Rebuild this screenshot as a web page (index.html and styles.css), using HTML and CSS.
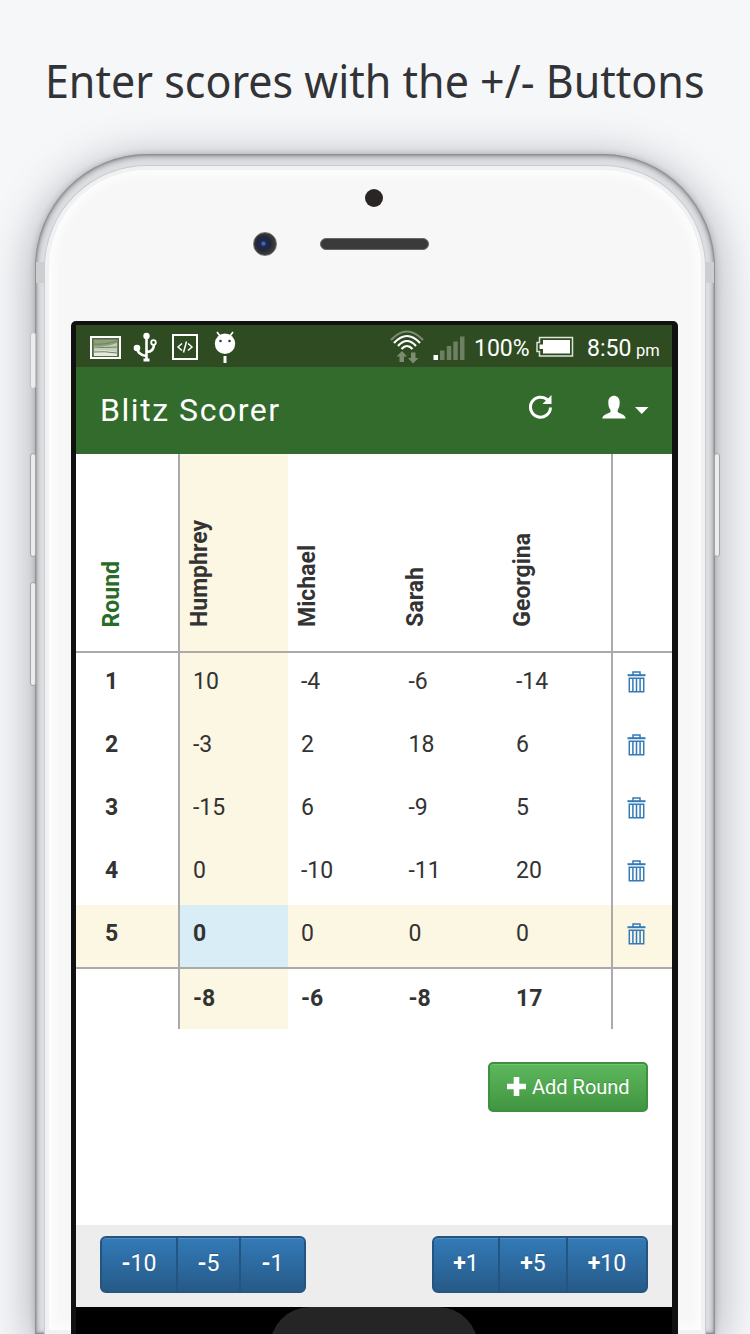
FILE: index.html
```html
<!DOCTYPE html>
<html lang="en">
<head>
<meta charset="utf-8">
<title>Blitz Scorer</title>
<link rel="stylesheet" href="styles.css">
</head>
<body>
<svg width="0" height="0" class="defs" aria-hidden="true">
  <symbol id="trash" viewBox="0 0 18 22">
    <path d="M0 4.200h18" fill="none" stroke="currentColor" stroke-width="2"/>
    <path d="M5.500 4V1h7v3M1.800 7.200h14.400v13.600H1.800zM5.400 7v14M9 7v14M12.600 7v14" fill="none" stroke="currentColor" stroke-width="1.500"/>
  </symbol>
</svg>
<h1 class="headline"><span class="headline-text">Enter scores with the +/- Buttons</span></h1>
<div class="phone">
  <i class="side mute"></i><i class="side vol-up"></i><i class="side vol-down"></i><i class="side power"></i>
  <i class="antenna left"></i><i class="antenna right"></i>
  <div class="face">
    <div class="sensors">
      <i class="proximity"></i>
      <div class="sensor-row"><i class="camera"></i><i class="speaker"></i></div>
    </div>
    <div class="screen">
      <div class="status">
        <svg class="status-left" width="150" height="34" viewBox="0 0 150 34">
          <rect x="1" y="7" width="29" height="21" fill="#52693f" stroke="#fff" stroke-width="2"/>
          <rect x="3.500" y="9.500" width="24" height="16" fill="#8da17d"/>
          <path d="M4 16q10 2 23-3v13H4z" fill="#c3cfba"/><path d="M4 21q12-2 23 1v4H4z" fill="#e4eadf"/>
          <path d="M4 14q10 1 23-3M4 17q10 1 23 0M4 22q10-1 23 1" fill="none" stroke="#6d805f"/>
          <g fill="none" stroke="#fff" stroke-width="2.600"><path d="M56.500 5v24M47.500 18q0 7 9 8M64 14q0 8-7.500 8"/><circle cx="63.500" cy="12.500" r="2.300" stroke-width="1.800"/></g>
          <circle cx="56.500" cy="6" r="3.200" fill="#fff"/><circle cx="47" cy="18" r="3.300" fill="#fff"/><path d="M53.500 28.500h6v3h-6z" fill="#fff"/>
          <rect x="83" y="5" width="24" height="24" fill="none" stroke="#fff" stroke-width="2"/>
          <path d="M92 13.500l-4 3.500 4 3.500M98 13.500l4 3.500-4 3.500M96.500 11.500l-3 11" fill="none" stroke="#fff" stroke-width="1.500"/>
          <path d="M130 6l-3-4M140 6l3-4" stroke="#fff" stroke-width="1.700"/><circle cx="135" cy="13.800" r="10.200" fill="#fff"/>
          <circle cx="130.500" cy="11" r="1.300" fill="#2e4b20"/><circle cx="139.500" cy="11" r="1.300" fill="#2e4b20"/><path d="M133.500 26h3v7h-3z" fill="#fff"/>
        </svg>
        <svg class="signal" width="76" height="36" viewBox="0 0 76 36">
          <g fill="none" stroke="#fff" stroke-width="2.200"><path d="M1 10q16-17 32 0" stroke="#7b8d70"/><path d="M4 13q13-14 26 0M8 16q9-10 18 0M11.500 19q5.500-6 11 0"/></g>
          <path d="M12 21l5 5.500h-3v5.500h-4.500v-5.500h-3zM23 33.500l-5-5.500h3v-5.500h4.500V28h3z" fill="#7b8d70"/>
          <path d="M43.500 25h4.500v5h-4.500z" fill="#fff"/>
          <path d="M50 20.500h4.500V30H50zM56.800 16h4.500v14h-4.500zM63.300 11.500h4.500V30h-4.500zM70 6.500h4.500V30H70z" fill="#6d8063"/>
        </svg>
        <span class="percent">100%</span>
        <svg class="battery" width="38" height="22" viewBox="0 0 38 22"><path d="M3.500 1.500h33V20h-33v-4.500H1v-9h2.500z" fill="none" stroke="#dce3d8" stroke-width="1.500"/><path d="M7 4h27v13.500H7V13H3.500V8.500H7z" fill="#fff"/></svg>
        <span class="clock">8:50 <small>pm</small></span>
      </div>
      <div class="navbar">
        <span class="brand">Blitz Scorer</span>
        <svg class="refresh" width="24" height="24" viewBox="0 0 24 24"><path d="M21.500 12.500A10 10 0 1 1 18.500 5" fill="none" stroke="#fff" stroke-width="3"/><path d="M22.500 0v9h-9z" fill="#fff"/></svg>
        <svg class="user" width="48" height="24" viewBox="0 0 48 24"><path d="M6.300 7C6.300-1.500 17.700-1.500 17.700 7c0 3-.5 6-2 8v2c1 1.300 8 2.500 8 6.500H.3C.3 19.500 7.500 18.300 8.500 17v-2C6.800 13 6.300 10 6.300 7z" fill="#fff"/><path d="M33 12h13.500L39.700 19z" fill="#fff"/></svg>
      </div>
      <table class="scores">
        <colgroup><col class="c-round"><col class="c-first"><col class="c-player"><col class="c-player"><col class="c-last"><col></colgroup>
        <thead><tr><th class="round"><span>Round</span></th><th class="active"><span>Humphrey</span></th><th><span>Michael</span></th><th><span>Sarah</span></th><th class="last"><span>Georgina</span></th><th></th></tr></thead>
        <tbody>
          <tr><th class="round">1</th><td class="active">10</td><td>-4</td><td>-6</td><td class="last">-14</td><td class="del"><svg><use href="#trash"/></svg></td></tr>
          <tr><th class="round">2</th><td class="active">-3</td><td>2</td><td>18</td><td class="last">6</td><td class="del"><svg><use href="#trash"/></svg></td></tr>
          <tr><th class="round">3</th><td class="active">-15</td><td>6</td><td>-9</td><td class="last">5</td><td class="del"><svg><use href="#trash"/></svg></td></tr>
          <tr><th class="round">4</th><td class="active">0</td><td>-10</td><td>-11</td><td class="last">20</td><td class="del"><svg><use href="#trash"/></svg></td></tr>
          <tr class="current"><th class="round">5</th><td class="active cell">0</td><td>0</td><td>0</td><td class="last">0</td><td class="del"><svg><use href="#trash"/></svg></td></tr>
        </tbody>
        <tfoot><tr><th class="round"></th><td class="active">-8</td><td>-6</td><td>-8</td><td class="last">17</td><td></td></tr></tfoot>
      </table>
      <div class="actions"><button class="add"><svg width="19" height="19" viewBox="0 0 19 19"><path d="M6.700 0h5.600v6.700H19v5.600h-6.700V19H6.700v-6.700H0V6.700h6.700z" fill="#fff"/></svg>Add Round</button></div>
      <div class="toolbar">
        <div class="group minus"><button><b>-</b>10</button><button><b>-</b>5</button><button><b>-</b>1</button></div>
        <div class="group plus"><button><b>+</b>1</button><button><b>+</b>5</button><button><b>+</b>10</button></div>
      </div>
      <div class="keys"><i class="home"></i></div>
    </div>
  </div>
</div>
</body>
</html>
```
FILE: styles.css
```css
* { box-sizing: border-box; }
body { margin: 0; width: 750px; height: 1334px; overflow: hidden; background: #f6f7f9; color: #333; font-family: Roboto, sans-serif; }
.defs { position: absolute; }
i { display: block; }
.headline { margin: 0; height: 154px; padding-top: 48px; display: flex; justify-content: center; align-items: flex-start; color: #323336; font: 400 46px/64px "Noto Sans", sans-serif; }
.headline-text { white-space: nowrap; transform: scaleX(.935); }

.phone { position: relative; width: 680px; height: 1180px; margin-left: 35px; padding: 11px 9px 0; border-radius: 112px 112px 0 0 / 114px 114px 0 0; background: #dcdee1;
  box-shadow: 0 8px 44px 3px rgba(50,55,65,.38), 0 0 6px rgba(50,55,65,.25), inset 0 0 2px 1px #85878b, inset 0 1px 5px 2px #9b9da0; }
.face { height: 1169px; padding-top: 23px; border-radius: 103px 103px 0 0; border: 1px solid #c9cbce; border-bottom: 0; background: #f7f7f7; box-shadow: inset 0 0 0 4px #f0f1f2, inset 0 0 8px 9px #fdfdfd; }
.side { position: absolute; width: 6px; border: 1px solid #a3a5a9; border-radius: 3px; background: #eceded; }
.mute { left: -5px; top: 178px; height: 57px; border-color: #c1c3c6; }
.vol-up { left: -5px; top: 299px; height: 104px; }
.vol-down { left: -5px; top: 428px; height: 104px; }
.power { right: -5px; top: 299px; height: 104px; }
.antenna { position: absolute; top: 108px; width: 9px; height: 21px; background: #cdcecf; }
.left { left: 1px; } .right { right: 1px; }
.sensors { height: 132px; }
.proximity { width: 18px; height: 18px; margin-left: 320px; border-radius: 50%; background: #2a2525; }
.sensor-row { display: flex; align-items: center; height: 24px; margin: 25px 0 0 208px; }
.camera { width: 24px; height: 24px; border-radius: 50%; border: 1px solid #777; background: radial-gradient(circle at 43% 48%, #52699d 0 1px, #1b2755 3px 5px, #25282f 7px, #333 9px, #4b4d50); }
.speaker { width: 109px; height: 12px; margin-left: 43px; border-radius: 6px; border: 1px solid #686868; background: #3a3a3a; }

.screen { width: 607px; height: 1013px; margin-left: 26px; border: solid #111; border-width: 4px 6px 0 5px; border-radius: 5px 5px 0 0; background: #fff; }
.status { display: flex; height: 42px; background: #2f4b21; color: #fff; font-size: 23px; line-height: 47px; }
.status-left { margin: 5px 0 0 14px; }
.signal { margin: 5px 0 0 150px; }
.percent { width: 57px; margin-left: 8px; white-space: nowrap; }
.battery { margin: 11px 0 0 5px; }
.clock { margin-left: 13px; white-space: nowrap; word-spacing: -1px; }
.clock small { font-size: 16.5px; }
.navbar { display: flex; height: 87px; padding-left: 24px; background: #336b2d; color: #fff; }
.brand { width: 429px; font-size: 32px; line-height: 87px; letter-spacing: 1.55px; }
.refresh { margin-top: 28px; }
.user { margin: 28px 0 0 49px; }

.scores { width: 596px; table-layout: fixed; border-spacing: 0; font-size: 23px; line-height: 28px; }
.c-round { width: 102px; } .c-first { width: 110px; } .c-player { width: 107.500px; } .c-last { width: 110px; }
.scores th, .scores td { padding: 15px 0 0 13px; text-align: left; vertical-align: top; }
.scores .active { border-left: 2px solid #aaa; background: #fcf7e3; }
.scores .last { border-right: 2px solid #aaa; }
.scores thead th { height: 199px; border-bottom: 2px solid #aaa; padding: 0 0 24px 6px; vertical-align: bottom; }
.scores thead span { display: block; writing-mode: vertical-rl; transform: rotate(180deg); line-height: 28px; white-space: nowrap; }
.scores thead .round { padding-left: 22px; color: #286b26; }
.scores tbody tr { height: 63px; }
.scores tbody .round { padding-left: 29px; }
.scores .current { height: 64px; background: #fcf7e3; }
.scores .current > * { border-bottom: 2px solid #aaa; }
.scores .cell { background: #d9edf7; font-weight: 700; }
.scores .del { padding: 18px 0 0 14px; color: #337ab7; }
.del svg { display: block; width: 19px; height: 22px; }
.scores tfoot tr { height: 60px; font-weight: 700; }
.scores tfoot td { padding-top: 16px; }

button { font-family: inherit; margin: 0; color: #fff; text-shadow: 0 -1px 0 rgba(0,0,0,.2); }
.actions { height: 196px; padding: 33px 24px 0 0; display: flex; justify-content: flex-end; align-items: flex-start; }
.add { display: flex; align-items: center; gap: 6px; width: 160px; height: 50px; padding: 0 0 1px 17px; border: 2px solid #3e8f3e; border-radius: 5px; background: linear-gradient(#5cb85c, #419641); box-shadow: inset 0 1px 0 rgba(255,255,255,.15); font-size: 20px; white-space: nowrap; }
.toolbar { display: flex; justify-content: space-between; align-items: flex-start; height: 82px; padding: 11px 24px 0; background: #ededed; }
.group { display: flex; height: 57px; border: 2px solid #245580; border-radius: 6px; background: linear-gradient(#337ab7, #265a88); box-shadow: inset 0 1px 0 rgba(255,255,255,.15); }
.group button { padding: 0 0 2px; border: 0; border-right: 2px solid #245580; background: none; font-size: 23px; }
.group button:last-child { border-right: 0; }
.minus button:nth-child(1) { width: 76px; } .minus button:nth-child(2) { width: 63px; } .minus button:nth-child(3) { width: 63px; }
.plus button:nth-child(1) { width: 66px; } .plus button:nth-child(2) { width: 68px; } .plus button:nth-child(3) { width: 78px; }
.keys { height: 27px; overflow: hidden; background: #000; }
.home { width: 208px; height: 80px; margin-left: 194px; border-radius: 40px; background: #252525; }
```
